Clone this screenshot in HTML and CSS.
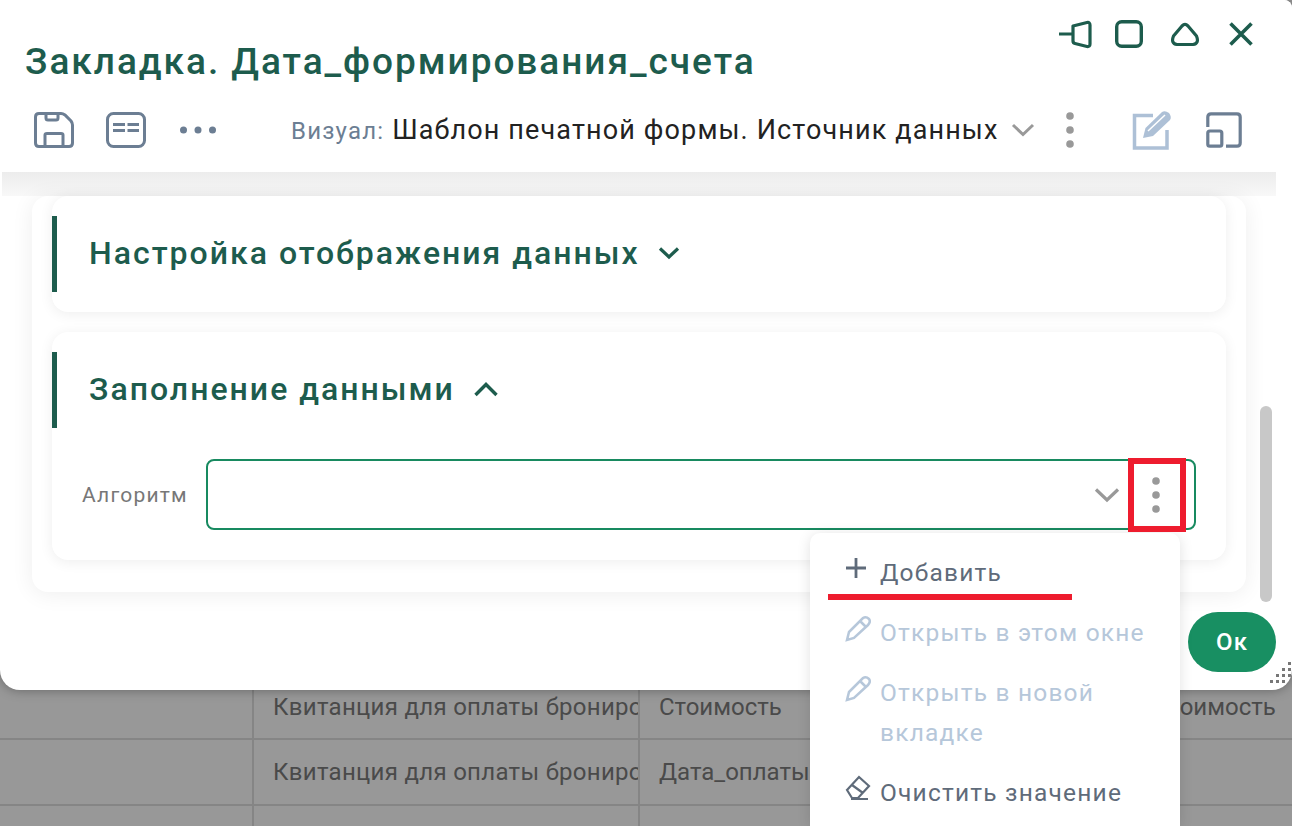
FILE: index.html
```html
<!DOCTYPE html>
<html lang="ru">
<head>
<meta charset="utf-8">
<title>Закладка</title>
<link rel="stylesheet" href="styles.css">
</head>
<body>
<div class="table">
  <div class="row row-first"><div class="cell c1"></div><div class="cell c2">Квитанция для оплаты бронирования</div><div class="cell c3">Стоимость</div><div class="cell c4">Стоимость</div></div>
  <div class="row"><div class="cell c1"></div><div class="cell c2">Квитанция для оплаты бронирования</div><div class="cell c3">Дата_оплаты</div><div class="cell c4"></div></div>
  <div class="row row-last"><div class="cell c1"></div><div class="cell c2"></div><div class="cell c3"></div><div class="cell c4"></div></div>
</div>

<section class="modal">
  <header class="head">
    <div class="title-row">
      <h1 class="title">Закладка. Дата_формирования_счета</h1>
      <div class="win">
        <svg class="win-pin" width="34" height="30" viewBox="0 0 34 30"><path d="M1 15H15M15 7L29 3.500Q32 3 32 6V25Q32 28 29 27.500L17 24.500Q15 24 15 22Z" fill="none" stroke="#1d5c4d" stroke-width="3.200" stroke-linejoin="round"/></svg>
        <svg class="win-max" width="28" height="28" viewBox="0 0 28 28"><rect x="1.700" y="1.700" width="24.600" height="24.600" rx="5" fill="none" stroke="#1d5c4d" stroke-width="3.400"/></svg>
        <svg class="win-up" width="30" height="26" viewBox="0 0 30 26"><path d="M12 5Q15 2 18 5L26.500 15Q29.500 22.500 23 23.500H7Q.5 22.500 3.500 15Z" fill="none" stroke="#1d5c4d" stroke-width="3.200" stroke-linejoin="round"/></svg>
        <svg class="win-close" width="26" height="26" viewBox="0 0 26 26"><path d="M2.500 2.500L23.500 23.500M23.500 2.500L2.500 23.500" fill="none" stroke="#1d5c4d" stroke-width="3.600"/></svg>
      </div>
    </div>
    <div class="tools">
      <svg class="tool-save" width="40" height="36" viewBox="0 0 40 36"><path d="M5 1.500H27Q29 1.500 31 3L37 9Q38.500 11 38.500 13V31Q38.500 34.500 35 34.500H5Q1.500 34.500 1.500 31V5Q1.500 1.500 5 1.500ZM12 1.500V6Q12 8 14 8H22Q24 8 24 6V1.500M11 34.500V23Q11 21.500 13 21.500H27Q29 21.500 29 23V34.500" fill="none" stroke="#6c7e93" stroke-width="3"/></svg>
      <svg class="tool-form" width="40" height="36" viewBox="0 0 40 36"><rect x="1.500" y="1.500" width="37" height="33" rx="6" fill="none" stroke="#6c7e93" stroke-width="3"/><path d="M7 12.500H19M21.500 12.500H33M7 18.500H19M21.500 18.500H33" stroke="#6c7e93" stroke-width="3"/></svg>
      <svg class="tool-more" width="36" height="8" viewBox="0 0 36 8"><circle cx="3.500" cy="4" r="3.500" fill="#6c7e93"/><circle cx="18" cy="4" r="3.500" fill="#6c7e93"/><circle cx="32.500" cy="4" r="3.500" fill="#6c7e93"/></svg>
      <div class="visual"><span class="visual-label">Визуал:</span> <span class="visual-name">Шаблон печатной формы. Источник данных</span></div>
      <svg class="tool-chev" width="24" height="14" viewBox="0 0 24 14"><path d="M2 2L12 11.500L22 2" fill="none" stroke="#999" stroke-width="3"/></svg>
      <svg class="tool-dots" width="12" height="38" viewBox="0 0 12 38"><circle cx="6" cy="5" r="3.800" fill="#999"/><circle cx="6" cy="19" r="3.800" fill="#999"/><circle cx="6" cy="33" r="3.800" fill="#999"/></svg>
      <svg class="tool-edit" width="40" height="40" viewBox="0 0 40 40"><path d="M21 5.500H2.500V38H35V20" fill="none" stroke="#adc0d6" stroke-width="3.500"/><path d="M11 28L13.500 18L30 2Q33 0 37 3Q40 7 38 10L21 26Z" fill="#adc0d6"/><path d="M16 21L33 5" stroke="#fff" stroke-width="1.500"/></svg>
      <svg class="tool-resize" width="36" height="36" viewBox="0 0 36 36"><path d="M1.800 15V5Q1.800 1.800 5 1.800H31Q34.200 1.800 34.200 5V31Q34.200 34.200 31 34.200H20" fill="none" stroke="#6c7e93" stroke-width="3.200"/><rect x="1.800" y="19" width="14" height="15.200" rx="2" fill="none" stroke="#6c7e93" stroke-width="3.200"/></svg>
    </div>
  </header>

  <div class="body">
    <div class="outer">
      <div class="card">
        <div class="sec-head">
          <h2 class="sec-title">Настройка отображения данных</h2>
          <svg width="22" height="14" viewBox="0 0 22 14"><path d="M2 2.500L11 11L20 2.500" fill="none" stroke="#1d5c4d" stroke-width="3.200"/></svg>
        </div>
      </div>
      <div class="card">
        <div class="sec-head">
          <h2 class="sec-title">Заполнение данными</h2>
          <svg width="26" height="16" viewBox="0 0 26 16"><path d="M2.500 14L13 3.500L23.500 14" fill="none" stroke="#1d5c4d" stroke-width="3.400"/></svg>
        </div>
        <div class="field">
          <label class="field-label">Алгоритм</label>
          <div class="input">
            <svg width="26" height="16" viewBox="0 0 26 16"><path d="M2 2.500L13 13L24 2.500" fill="none" stroke="#999" stroke-width="3.200"/></svg>
            <svg class="input-dots" width="12" height="38" viewBox="0 0 12 38"><circle cx="6" cy="5" r="3.800" fill="#999"/><circle cx="6" cy="19" r="3.800" fill="#999"/><circle cx="6" cy="33" r="3.800" fill="#999"/></svg>
          </div>
        </div>
      </div>
    </div>
    <div class="scrollbar"></div>
  </div>

  <div class="foot"><button class="ok">Ок</button></div>
  <svg class="grip" width="30" height="30" viewBox="0 0 30 30">
    <g fill="#777"><rect x="26" y="2" width="3" height="3"/><rect x="20" y="8" width="3" height="3"/><rect x="26" y="8" width="3" height="3"/><rect x="14" y="14" width="3" height="3"/><rect x="20" y="14" width="3" height="3"/><rect x="26" y="14" width="3" height="3"/><rect x="8" y="20" width="3" height="3"/><rect x="14" y="20" width="3" height="3"/><rect x="20" y="20" width="3" height="3"/></g>
  </svg>
</section>

<nav class="menu">
  <div class="item"><svg width="22" height="22" viewBox="0 0 22 22"><path d="M11 1V21M1 11H21" stroke="#5f6b7a" stroke-width="2.800"/></svg><span>Добавить</span></div>
  <div class="item off"><svg width="26" height="28" viewBox="0 0 26 28"><path d="M2 25L4 17L18 3Q21 1 24 4Q26 7 23 10L9 23ZM15 6L21 12" fill="none" stroke="#b6c7da" stroke-width="2.500"/></svg><span>Открыть в этом окне</span></div>
  <div class="item off"><svg width="26" height="28" viewBox="0 0 26 28"><path d="M2 25L4 17L18 3Q21 1 24 4Q26 7 23 10L9 23ZM15 6L21 12" fill="none" stroke="#b6c7da" stroke-width="2.500"/></svg><span>Открыть в новой вкладке</span></div>
  <div class="item"><svg width="26" height="26" viewBox="0 0 26 26"><path d="M2 15L14 2L24 11L13 23H7ZM7 10L18 18M6 24H23" fill="none" stroke="#5f6b7a" stroke-width="2.200"/></svg><span>Очистить значение</span></div>
</nav>

<div class="mark-box"></div>
<div class="mark-line"></div>
</body>
</html>
```
FILE: styles.css
```css
* { box-sizing: border-box; }
html, body { margin: 0; height: 100%; }
body {
  position: relative;
  width: 1292px;
  height: 826px;
  overflow: hidden;
  background: #989898;
  font-family: Roboto, "Liberation Sans", sans-serif;
}
svg { display: block; flex: none; }

.table { padding-top: 673px; }
.row { display: grid; grid-template-columns: 254px 386px 506px 146px; height: 66px; border-bottom: 2px solid #858585; }
.row-first { height: 67px; }
.row-last { height: 20px; border-bottom: 0; }
.cell { border-right: 2px solid #858585; display: flex; align-items: center; padding-left: 19px; overflow: hidden; white-space: nowrap; font-size: 24px; color: #4a4a4a; letter-spacing: .3px; }
.c3 { letter-spacing: 0; }
.c4 { border-right: 0; padding-left: 7px; letter-spacing: 0; }
.row-first .cell { padding-top: 3px; }

.modal {
  position: absolute; left: 0; top: 0; width: 1292px; height: 690px;
  background: #fff; border-radius: 0 8px 20px 20px;
  display: flex; flex-direction: column; overflow: hidden;
  box-shadow: 0 0 12px rgba(0,0,0,.35);
}
.head { height: 172px; flex: none; padding: 16px 38px 0 25px; background: #fff; }
.title-row { display: flex; justify-content: space-between; height: 92px; }
.title { margin: 24px 0 0; font-size: 37px; line-height: 44px; font-weight: 500; color: #1d5c4d; letter-spacing: 1.97px; white-space: nowrap; }
.win { display: flex; align-items: center; height: 40px; margin-top: -2px; }
.win-max { margin-left: 23px; }
.win-up { margin-left: 27px; }
.win-close { margin-left: 28px; }
.tools { display: flex; align-items: center; height: 44px; }
.tool-save { margin-left: 9px; }
.tool-form { margin-left: 32px; }
.tool-more { margin-left: 34px; }
.visual { margin-left: 75px; white-space: nowrap; font-size: 27px; letter-spacing: 1.13px; color: #222; }
.visual-label { font-size: 24px; color: #6c7e93; letter-spacing: 1.2px; }
.tool-chev { margin-left: 13px; }
.tool-dots { margin-left: 29px; }
.tool-edit { margin-left: 56px; }
.tool-resize { margin-left: 34px; }

.body {
  flex: 1; min-height: 0; display: flex; align-items: flex-end; position: relative;
  padding: 0 16px 98px 32px; gap: 14px; overflow: hidden;
  background: linear-gradient(#ececec, #f8f8f8) 2px 0 / 1274px 24px no-repeat;
}
.outer { width: 1214px; flex: none; display: flex; flex-direction: column; gap: 20px; padding: 0 20px 32px; border-radius: 16px; box-shadow: 0 2px 22px rgba(0,0,0,.07); }
.card { background: #fff; border-radius: 16px; box-shadow: 0 2px 14px rgba(0,0,0,.07); }
.sec-head { height: 116px; display: flex; align-items: center; gap: 18px; padding: 0 0 2px 37px; position: relative; }
.sec-head::before { content: ""; position: absolute; left: 0; top: 20px; bottom: 20px; width: 5px; background: #1d5c4d; }
.sec-title { margin: 0; font-size: 32px; font-weight: 500; line-height: 40px; color: #1d5c4d; letter-spacing: 2px; white-space: nowrap; }
.field { display: flex; align-items: center; padding: 0 30px 30px 30px; gap: 18px; margin-top: 11px; }
.field-label { font-size: 21px; color: #777; letter-spacing: 1.2px; white-space: nowrap; }
.input { flex: 1; height: 71px; border: 2px solid #188a60; border-radius: 8px; display: flex; align-items: center; justify-content: flex-end; gap: 30px; padding-right: 32px; }
.scrollbar { width: 12px; height: 196px; background: #c8c8c8; border-radius: 6px; margin-bottom: -10px; }

.foot { position: absolute; right: 16px; top: 612px; }
.ok { width: 88px; height: 60px; border: 0; border-radius: 30px; background: #188f62; color: #fff; font: 500 24px Roboto, sans-serif; letter-spacing: 1px; padding: 0; display: block; }
.grip { position: absolute; right: 0; bottom: 0; }

.menu { position: absolute; left: 810px; top: 533px; width: 370px; height: 293px; background: #fff; border-radius: 10px 10px 0 0; box-shadow: 0 2px 14px rgba(0,0,0,.12); padding: 20px 30px 0 35px; display: flex; flex-direction: column; gap: 20px; overflow: hidden; }
.item { display: flex; gap: 9px; font-size: 24.5px; line-height: 40px; color: #5f6b7a; letter-spacing: 1.2px; }
.item svg { margin-top: 2px; }
.item:first-child { gap: 13px; }
.item:first-child svg { margin-top: 4px; }
.off { color: #b6c7da; }
.mark-box { position: absolute; left: 1128px; top: 458px; width: 58px; height: 74px; border: 6px solid #ee1c2e; }
.mark-line { position: absolute; left: 828px; top: 594px; width: 244px; height: 6px; background: #ee1c2e; }
```
